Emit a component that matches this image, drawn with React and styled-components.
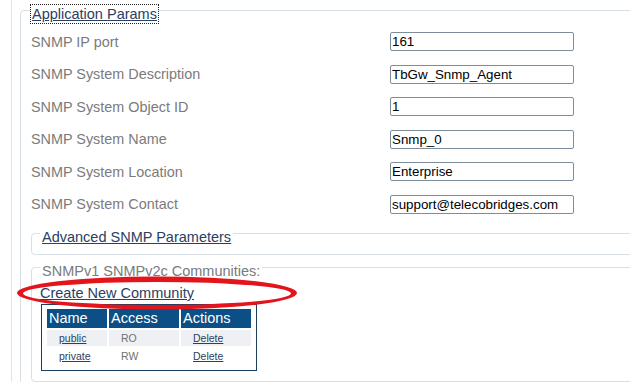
import React from "react";
import styled, { createGlobalStyle } from "styled-components";

const Global = createGlobalStyle`
  html, body { margin: 0; padding: 0; background: #fff; overflow: hidden; }
  body { font-family: "Liberation Sans", Arial, sans-serif; }
`;

const Page = styled.div`
  margin-left: 11px;
  padding-left: 8px;
  border-left: 1px solid #dfe4e8;
  min-height: 100vh;
  box-sizing: border-box;
`;

const Fieldset = styled.fieldset`
  position: relative;
  margin: ${(p) => p.$margin || "0"};
  padding: ${(p) => p.$padding || "0 8px 11px"};
  border: 1px solid #d8e0e6;
  border-radius: 4px;
  min-width: 0;
  width: ${(p) => p.$width || "auto"};
  box-sizing: border-box;
`;

const Legend = styled.legend`
  padding: 7px ${(p) => (p.$tight ? "1px" : "2px")} 0;
  line-height: 14px;
  font-size: 14.5px;
  color: ${(p) => (p.$plain ? "#7b7b7b" : "#2b4063")};
  text-decoration: ${(p) => (p.$plain ? "none" : "underline")};
`;

const LegendLink = styled.a`
  color: inherit;
  text-decoration: underline;
  outline: ${(p) => (p.$focused ? "1px dotted #222" : "none")};
  outline-offset: 1px;
  cursor: pointer;
`;

const Form = styled.div`
  display: grid;
  grid-template-columns: 359px 184px;
  row-gap: 13.5px;
  padding-top: 11px;
  align-items: center;
`;

const Label = styled.div`
  font-size: 14.4px;
  color: #7b7b7b;
`;

const Input = styled.input`
  box-sizing: border-box;
  width: 184px;
  height: 19px;
  padding: 0 1px;
  border: 1px solid #7d8d9c;
  border-radius: 2px;
  font-family: "Liberation Sans", Arial, sans-serif;
  font-size: 13.33px;
  color: #000;
  background: #fff;
`;

const CommunitiesBody = styled.div`
  position: relative;
`;

const CreateLink = styled.a`
  display: block;
  padding-top: 7px;
  font-size: 14.5px;
  line-height: 16px;
  color: #2b4063;
  text-decoration: underline;
  cursor: pointer;
`;

const TableBox = styled.div`
  display: inline-block;
  margin: 3px 0 0 1px;
  padding: 2px 3px 4px 3px;
  border: 1px solid #1d3f5e;
`;

const Table = styled.table`
  border-spacing: 2px;
  border-collapse: separate;
`;

const Th = styled.th`
  width: ${(p) => p.$w}px;
  height: 19px;
  padding: 0 0 0 2px;
  box-sizing: border-box;
  background: #0b4f86;
  color: #fff;
  font-weight: normal;
  font-size: 14.5px;
  text-align: left;
`;

const Td = styled.td`
  height: 16px;
  padding: 0 0 0 12px;
  box-sizing: border-box;
  background: ${(p) => (p.$alt ? "#eef0f3" : "#fff")};
  font-size: 10.5px;
  color: #707070;
`;

const CellLink = styled.a`
  color: #2b4063;
  text-decoration: underline;
  cursor: pointer;
`;

const Ellipse = styled.svg`
  position: absolute;
  left: -24px;
  top: -3px;
  pointer-events: none;
  z-index: 2;
`;

const fields = [
  ["SNMP IP port", "161"],
  ["SNMP System Description", "TbGw_Snmp_Agent"],
  ["SNMP System Object ID", "1"],
  ["SNMP System Name", "Snmp_0"],
  ["SNMP System Location", "Enterprise"],
  ["SNMP System Contact", "support@telecobridges.com"],
];

const communities = [
  ["public", "RO"],
  ["private", "RW"],
];

export default function App() {
  return (
    <>
      <Global />
      <Page>
        <Fieldset $width="720px" $padding="0 8px 40px 10px">
          <Legend $tight>
            <LegendLink $focused>Application Params</LegendLink>
          </Legend>
          <Form>
            {fields.map(([label, value]) => (
              <React.Fragment key={label}>
                <Label>{label}</Label>
                <Input defaultValue={value} />
              </React.Fragment>
            ))}
          </Form>
          <Fieldset $margin="9.5px 0 0 0" $padding="0 8px 10px">
            <Legend>
              <LegendLink>Advanced SNMP Parameters</LegendLink>
            </Legend>
          </Fieldset>
          <Fieldset $margin="1.5px 0 0 0" $padding="0 8px 6px">
            <Legend $plain>SNMPv1 SNMPv2c Communities:</Legend>
            <CommunitiesBody>
              <CreateLink>Create New Community</CreateLink>
              <TableBox>
                <Table>
                  <thead>
                    <tr>
                      <Th $w={60}>Name</Th>
                      <Th $w={70}>Access</Th>
                      <Th $w={70}>Actions</Th>
                    </tr>
                  </thead>
                  <tbody>
                    {communities.map(([name, access], i) => (
                      <tr key={name}>
                        <Td $alt={i === 0}>
                          <CellLink>{name}</CellLink>
                        </Td>
                        <Td $alt={i === 0}>{access}</Td>
                        <Td $alt={i === 0}>
                          <CellLink>Delete</CellLink>
                        </Td>
                      </tr>
                    ))}
                  </tbody>
                </Table>
              </TableBox>
              <Ellipse width="282" height="36" viewBox="0 0 282 36">
                <path
                  fillRule="evenodd"
                  fill="#e3141c"
                  d="M1 18 A140 16.5 0 1 0 281 18 A140 16.5 0 1 0 1 18 Z M7 18.5 A134 11.5 0 1 1 275 18.5 A134 11.5 0 1 1 7 18.5 Z"
                />
              </Ellipse>
            </CommunitiesBody>
          </Fieldset>
        </Fieldset>
      </Page>
    </>
  );
}
